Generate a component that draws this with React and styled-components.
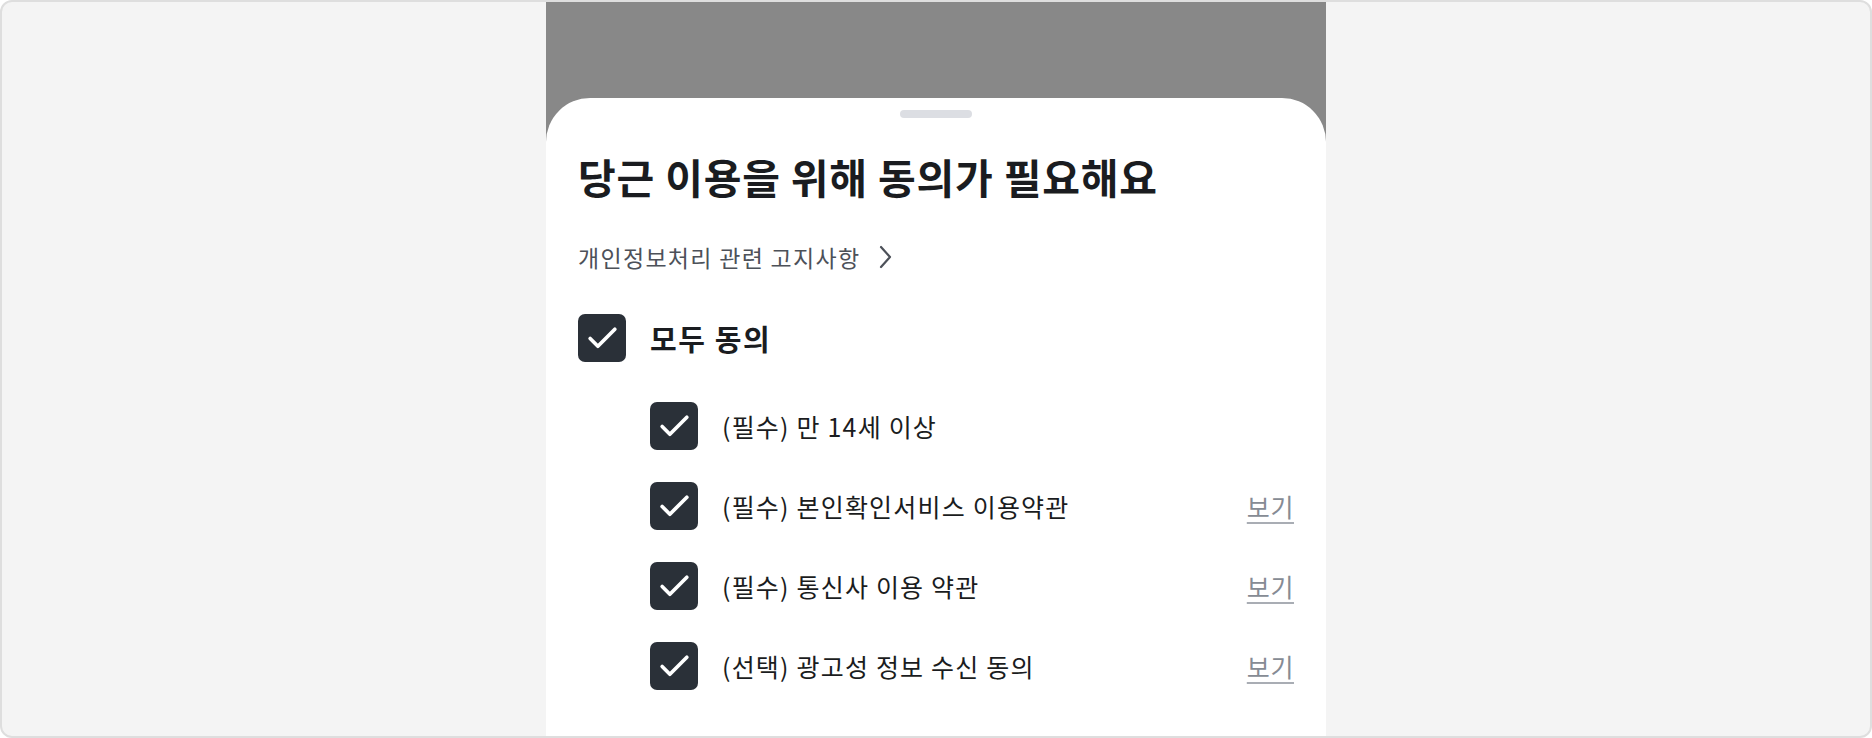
import React from 'react';
import styled, { createGlobalStyle } from 'styled-components';

const GlobalStyle = createGlobalStyle`
  html, body {
    margin: 0;
    padding: 0;
    background: #ffffff;
  }
  * {
    box-sizing: border-box;
  }
`;

const Frame = styled.div`
  width: 1872px;
  height: 738px;
  border: 2px solid #dedede;
  border-radius: 12px;
  background: #f4f4f4;
  overflow: hidden;
  display: flex;
  justify-content: center;
  font-family: "Noto Sans CJK KR", "Noto Sans", sans-serif;
`;

const Backdrop = styled.div`
  width: 780px;
  background: #888888;
  display: flex;
  flex-direction: column;
  padding-top: 96px;
`;

const Sheet = styled.div`
  flex: 1;
  background: #ffffff;
  border-radius: 44px 44px 0 0;
  padding: 12px 32px 0;
  display: flex;
  flex-direction: column;
`;

const Handle = styled.div`
  align-self: center;
  width: 72px;
  height: 8px;
  border-radius: 4px;
  background: #dcdee3;
`;

const Title = styled.h1`
  margin: 34px 0 0;
  font-size: 41px;
  line-height: 48px;
  font-weight: 700;
  letter-spacing: 0.8px;
  color: #1a1c20;
`;

const NoticeLink = styled.a`
  margin-top: 41px;
  display: inline-flex;
  align-items: center;
  gap: 18px;
  align-self: flex-start;
  font-size: 23px;
  line-height: 32px;
  letter-spacing: 1.3px;
  color: #4d5159;
  text-decoration: none;
  cursor: pointer;
`;

const Row = styled.div`
  display: flex;
  align-items: center;
  gap: 24px;
  height: 48px;
  padding-left: ${(p) => (p.$indent ? '72px' : '0')};
`;

const AllRow = styled(Row)`
  margin-top: 41px;
`;

const List = styled.div`
  margin-top: 40px;
  display: flex;
  flex-direction: column;
  gap: 32px;
`;

const Box = styled.span`
  flex: none;
  width: 48px;
  height: 48px;
  border-radius: 7px;
  background: #2a3038;
  display: flex;
  align-items: center;
  justify-content: center;
`;

const Label = styled.span`
  flex: 1;
  font-size: ${(p) => (p.$strong ? '29px' : '25px')};
  font-weight: ${(p) => (p.$strong ? 700 : 400)};
  letter-spacing: ${(p) => (p.$strong ? '1.6px' : '1.2px')};
  color: #1a1c20;
`;

const ViewLink = styled.a`
  font-size: 25px;
  letter-spacing: 0.6px;
  color: #868b94;
  text-decoration: underline;
  text-decoration-color: #a9adb4;
  text-decoration-thickness: 2px;
  text-underline-offset: 5px;
  cursor: pointer;
`;

const CheckIcon = () => (
  <svg width="37" height="37" viewBox="0 0 24 24" fill="none" stroke="#ffffff" strokeWidth="2.4" strokeLinecap="round" strokeLinejoin="round">
    <path d="M20 6 9 17l-5-5" />
  </svg>
);

const Chevron = () => (
  <svg width="14" height="24" viewBox="0 0 14 24" fill="none" stroke="#4d5159" strokeWidth="2.2" strokeLinecap="round" strokeLinejoin="round">
    <path d="M3 2l9 10-9 10" />
  </svg>
);

const terms = [
  { label: '(필수) 만 14세 이상', view: false },
  { label: '(필수) 본인확인서비스 이용약관', view: true },
  { label: '(필수) 통신사 이용 약관', view: true },
  { label: '(선택) 광고성 정보 수신 동의', view: true },
];

export default function App() {
  return (
    <>
      <GlobalStyle />
      <Frame>
        <Backdrop>
          <Sheet>
            <Handle />
            <Title>당근 이용을 위해 동의가 필요해요</Title>
            <NoticeLink>
              개인정보처리 관련 고지사항
              <Chevron />
            </NoticeLink>
            <AllRow>
              <Box><CheckIcon /></Box>
              <Label $strong>모두 동의</Label>
            </AllRow>
            <List>
              {terms.map((t) => (
                <Row $indent key={t.label}>
                  <Box><CheckIcon /></Box>
                  <Label>{t.label}</Label>
                  {t.view && <ViewLink>보기</ViewLink>}
                </Row>
              ))}
            </List>
          </Sheet>
        </Backdrop>
      </Frame>
    </>
  );
}
